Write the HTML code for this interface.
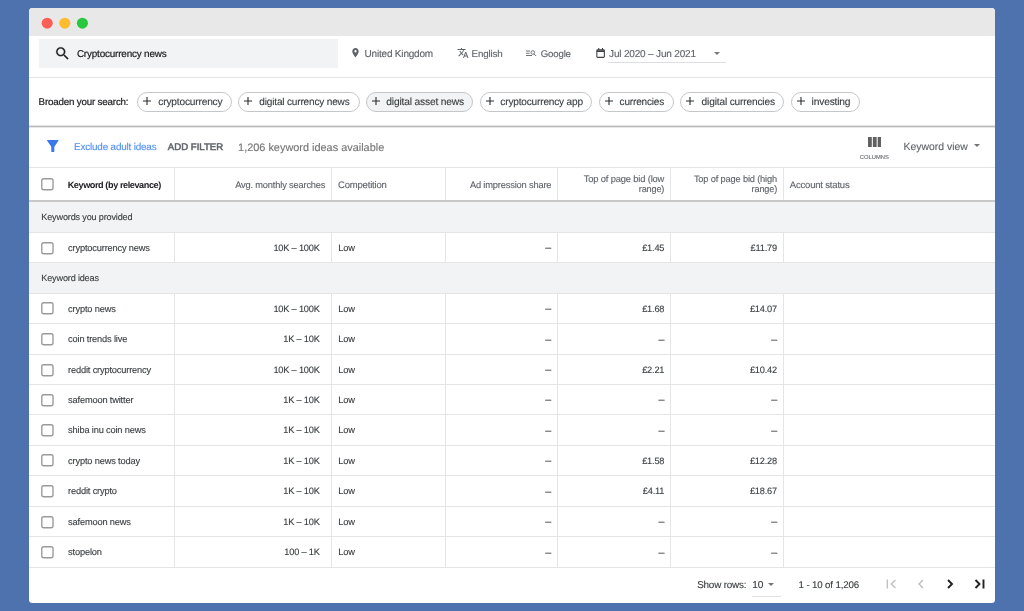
<!DOCTYPE html>
<html><head><meta charset="utf-8">
<style>
*{box-sizing:border-box;margin:0;padding:0}
html,body{width:1024px;height:611px;overflow:hidden}
body{background:#4d72ad;font-family:"Liberation Sans",Arial,sans-serif;color:#3c4043;position:relative;font-size:9px;text-rendering:geometricPrecision}
.win{position:absolute;left:29px;top:8px;width:966px;height:595px;background:#fff;border-radius:3.5px;overflow:hidden;will-change:transform}
.tb{position:absolute;left:0;top:0;width:100%;height:28.3px;background:#e8e8e8}
.dot{position:absolute;width:11px;height:11px;border-radius:50%}
.abs{position:absolute;white-space:nowrap}
.t{position:absolute;white-space:pre;line-height:12px}
.hl{position:absolute;left:0;width:100%;height:1px;background:#e5e5e5}
.chip{position:absolute;height:19.7px;border:1px solid #c4c7c9;border-radius:10px}
.vl{position:absolute;width:1px;background:#e5e5e5}
.rowbg{position:absolute;left:0;width:100%;background:#f1f3f4}
.cb{position:absolute;width:12.6px;height:12.6px;border:1.4px solid #9a9a9a;border-radius:2.5px;background:#fff}
</style></head><body>
<div class="win">
 <div class="tb"></div>
 <svg class="abs" style="left:11px;top:8px" width="50" height="15" viewBox="0 0 50 15"><circle cx="7.200" cy="7.200" r="5.550" fill="#fd5f57"/><circle cx="24.800" cy="7.200" r="5.550" fill="#fdbc2f"/><circle cx="42.400" cy="7.200" r="5.550" fill="#28c840"/></svg>
 <div class="abs" style="left:9.7px;top:31px;width:299.6px;height:29px;background:#f1f3f4"></div>
 <svg class="abs" style="left:25px;top:37px" width="17" height="17" viewBox="0 0 24 24"><path fill="#202124" stroke="#202124" stroke-width=".3" d="M15.500 14h-.79l-.28-.27A6.471 6.471 0 0 0 16 9.500 6.500 6.500 0 1 0 9.500 16c1.610 0 3.090-.590 4.230-1.570l.27.28v.79l5 4.990L20.490 19l-4.990-5zm-6 0C7.010 14 5 11.990 5 9.500S7.010 5 9.500 5 14 7.010 14 9.500 11.990 14 9.500 14z"/></svg>
 <div class="t" style="left:47.90px;top:41.00px;font-size:9.93px;letter-spacing:-0.189px;color:#202124;-webkit-text-stroke:0.2px;">Cryptocurrency news</div>
 <svg class="abs" style="left:321.3px;top:39.3px" width="11" height="11.300" viewBox="0 0 24 24" preserveAspectRatio="none"><path fill="#5f6368" d="M12 2C8.130 2 5 5.130 5 9c0 5.250 7 13 7 13s7-7.750 7-13c0-3.870-3.130-7-7-7zm0 9.500a2.500 2.500 0 0 1 0-5 2.500 2.500 0 0 1 0 5z"/></svg>
 <div class="t" style="left:335.50px;top:41.00px;font-size:10.03px;letter-spacing:-0.196px;color:#5f6368;-webkit-text-stroke:0.12px;">United Kingdom</div>
 <svg class="abs" style="left:427.5px;top:39px" width="12" height="12" viewBox="0 0 24 24"><path fill="#5f6368" d="M12.870 15.070l-2.540-2.510.03-.03A17.520 17.520 0 0 0 14.070 6H17V4h-7V2H8v2H1v1.990h11.170C11.500 7.920 10.440 9.750 9 11.350 8.070 10.320 7.300 9.190 6.690 8h-2c.73 1.630 1.730 3.170 2.980 4.560l-5.090 5.020L4 19l5-5 3.110 3.110.76-2.040zM18.500 10h-2L12 22h2l1.120-3h4.750L21 22h2l-4.500-12zm-2.620 7l1.620-4.330L19.120 17h-3.240z"/></svg>
 <div class="t" style="left:442.60px;top:41.00px;font-size:9.77px;letter-spacing:-0.176px;color:#5f6368;-webkit-text-stroke:0.12px;">English</div>
 <svg class="abs" style="left:497px;top:41.7px" width="10.500" height="6.500" viewBox="0 0 21 13"><g fill="none" stroke="#5f6368" stroke-width="1.800"><path d="M0 2h8M0 6.500h7M0 11h12"/><circle cx="13.500" cy="5" r="3.600"/><path d="M16 7.800l4.500 4.500"/></g></svg>
 <div class="t" style="left:511.80px;top:41.00px;font-size:9.68px;letter-spacing:-0.200px;color:#5f6368;-webkit-text-stroke:0.12px;">Google</div>
 <svg class="abs" style="left:566.8px;top:39.8px" width="9.200" height="10.200" viewBox="0 0 17 19"><g fill="none" stroke="#3c4043" stroke-width="2"><rect x="1.500" y="3.500" width="14" height="14" rx="1.500"/><path d="M1.500 6h14" stroke-width="3"/><path d="M5 0v4M12 0v4"/></g></svg>
 <div class="t" style="left:580.10px;top:41.00px;font-size:10.02px;letter-spacing:-0.183px;color:#5f6368;-webkit-text-stroke:0.12px;">Jul 2020 – Jun 2021</div>
 <div class="abs" style="left:685.3px;top:44px;width:0;height:0;border-left:3.300px solid transparent;border-right:3.300px solid transparent;border-top:3.300px solid #7a7a7a"></div>
 <div class="abs" style="left:579px;top:54px;width:117.500px;height:1px;background:#dcdee1"></div>
 <div class="hl" style="top:69px"></div>
 <div class="t" style="left:9.60px;top:89.00px;font-size:9.77px;letter-spacing:-0.180px;color:#202124;-webkit-text-stroke:0.2px;">Broaden your search:</div>
 <div class="chip" style="left:108px;top:84px;width:95px;"></div>
 <svg class="abs" style="left:114.3px;top:89.4px" width="8" height="8" viewBox="0 0 8 8"><path d="M4 0v8M0 4h8" stroke="#2a2c2f" stroke-width="1.100" fill="none"/></svg>
 <div class="t" style="left:129.35px;top:89.00px;font-size:10.16px;letter-spacing:-0.183px;color:#3c4043;-webkit-text-stroke:0.12px;">cryptocurrency</div>
 <div class="chip" style="left:209px;top:84px;width:122px;"></div>
 <svg class="abs" style="left:215.3px;top:89.4px" width="8" height="8" viewBox="0 0 8 8"><path d="M4 0v8M0 4h8" stroke="#2a2c2f" stroke-width="1.100" fill="none"/></svg>
 <div class="t" style="left:230.35px;top:89.00px;font-size:10.06px;letter-spacing:-0.172px;color:#3c4043;-webkit-text-stroke:0.12px;">digital currency news</div>
 <div class="chip" style="left:336.5px;top:84px;width:107.5px;background:#f1f3f4;"></div>
 <svg class="abs" style="left:342.8px;top:89.4px" width="8" height="8" viewBox="0 0 8 8"><path d="M4 0v8M0 4h8" stroke="#2a2c2f" stroke-width="1.100" fill="none"/></svg>
 <div class="t" style="left:357.35px;top:89.00px;font-size:10.22px;letter-spacing:-0.172px;color:#3c4043;-webkit-text-stroke:0.12px;">digital asset news</div>
 <div class="chip" style="left:451px;top:84px;width:112px;"></div>
 <svg class="abs" style="left:457.3px;top:89.4px" width="8" height="8" viewBox="0 0 8 8"><path d="M4 0v8M0 4h8" stroke="#2a2c2f" stroke-width="1.100" fill="none"/></svg>
 <div class="t" style="left:471.35px;top:89.00px;font-size:10.10px;letter-spacing:-0.183px;color:#3c4043;-webkit-text-stroke:0.12px;">cryptocurrency app</div>
 <div class="chip" style="left:569.5px;top:84px;width:75.5px;"></div>
 <svg class="abs" style="left:575.8px;top:89.4px" width="8" height="8" viewBox="0 0 8 8"><path d="M4 0v8M0 4h8" stroke="#2a2c2f" stroke-width="1.100" fill="none"/></svg>
 <div class="t" style="left:590.60px;top:89.00px;font-size:10.04px;letter-spacing:-0.178px;color:#3c4043;-webkit-text-stroke:0.12px;">currencies</div>
 <div class="chip" style="left:651px;top:84px;width:104px;"></div>
 <svg class="abs" style="left:657.3px;top:89.4px" width="8" height="8" viewBox="0 0 8 8"><path d="M4 0v8M0 4h8" stroke="#2a2c2f" stroke-width="1.100" fill="none"/></svg>
 <div class="t" style="left:672.60px;top:89.00px;font-size:10.16px;letter-spacing:-0.163px;color:#3c4043;-webkit-text-stroke:0.12px;">digital currencies</div>
 <div class="chip" style="left:761.5px;top:84px;width:69px;"></div>
 <svg class="abs" style="left:767.8px;top:89.4px" width="8" height="8" viewBox="0 0 8 8"><path d="M4 0v8M0 4h8" stroke="#2a2c2f" stroke-width="1.100" fill="none"/></svg>
 <div class="t" style="left:782.60px;top:89.00px;font-size:10.22px;letter-spacing:-0.172px;color:#3c4043;-webkit-text-stroke:0.12px;">investing</div>
 <div class="hl" style="top:117px;background:#e2e2e2"></div>
 <div class="hl" style="top:118px;background:#bbb"></div>
 <div class="hl" style="top:119px;background:#e6e6e6"></div>
 <svg class="abs" style="left:18.4px;top:132.3px" width="11.600" height="11.900" viewBox="0 0 11.600 11.900"><path fill="#3b79e8" d="M.4 0h10.800q.6 .3 .1 .9L7.350 6.700V11.300q0 .6-.6 .6H4.850q-.6 0-.6-.6V6.700L.3 .9Q-.2 .3 .4 0z"/></svg>
 <div class="t" style="left:45.10px;top:134.00px;font-size:9.89px;letter-spacing:-0.174px;color:#5290f5;-webkit-text-stroke:0.12px;">Exclude adult ideas</div>
 <div class="t" style="left:138.80px;top:134.00px;font-size:9.62px;letter-spacing:0.000px;color:#5f6368;-webkit-text-stroke:0.5px;">ADD FILTER</div>
 <div class="t" style="left:209.10px;top:134.00px;font-size:10.91px;letter-spacing:0.000px;color:#757575;-webkit-text-stroke:0.12px;">1,206 keyword ideas available</div>
 <svg class="abs" style="left:838.6px;top:129.1px" width="13.500" height="10" viewBox="0 0 13.500 10"><g fill="#616161"><rect x="0" y="0" width="3.800" height="10"/><rect x="4.850" y="0" width="3.800" height="10"/><rect x="9.700" y="0" width="3.800" height="10"/></g></svg>
 <div class="t" style="left:830.85px;top:144.00px;font-size:5.79px;letter-spacing:0.000px;color:#5f6368;-webkit-text-stroke:0.08px;">COLUMNS</div>
 <div class="t" style="left:874.50px;top:134.00px;font-size:10.44px;letter-spacing:0.000px;color:#5f6368;-webkit-text-stroke:0.12px;">Keyword view</div>
 <div class="abs" style="left:944.5px;top:136px;width:0;height:0;border-left:3.600px solid transparent;border-right:3.600px solid transparent;border-top:3.600px solid #757575"></div>
 <div class="hl" style="top:159px"></div>
 <div class="vl" style="left:145px;top:160px;height:400px"></div>
 <div class="vl" style="left:302px;top:160px;height:400px"></div>
 <div class="vl" style="left:416px;top:160px;height:400px"></div>
 <div class="vl" style="left:528px;top:160px;height:400px"></div>
 <div class="vl" style="left:641px;top:160px;height:400px"></div>
 <div class="vl" style="left:754px;top:160px;height:400px"></div>
 <svg class="abs" style="left:12px;top:170.00px" width="13" height="13" viewBox="0 0 13 13"><rect x=".8" y=".75" width="11.200" height="10.950" rx="1.900" fill="#fff" stroke="#999" stroke-width="1.350"/></svg>
 <div class="t" style="left:38.70px;top:171.00px;font-size:9.13px;letter-spacing:-0.424px;color:#202124;font-weight:bold;-webkit-text-stroke:0px;">Keyword (by relevance)</div>
 <div class="t" style="left:206.20px;top:171.00px;font-size:9.29px;letter-spacing:-0.172px;color:#5f6368;-webkit-text-stroke:0.12px;">Avg. monthly searches</div>
 <div class="t" style="left:309.00px;top:172.00px;font-size:9.49px;letter-spacing:-0.177px;color:#5f6368;-webkit-text-stroke:0.12px;">Competition</div>
 <div class="t" style="left:440.90px;top:171.00px;font-size:9.31px;letter-spacing:-0.172px;color:#5f6368;-webkit-text-stroke:0.12px;">Ad impression share</div>
 <div class="t" style="left:554.80px;top:165.00px;font-size:9.35px;letter-spacing:-0.161px;color:#5f6368;-webkit-text-stroke:0.12px;">Top of page bid (low</div>
 <div class="t" style="left:609.80px;top:175.00px;font-size:9.17px;letter-spacing:-0.170px;color:#5f6368;-webkit-text-stroke:0.12px;">range)</div>
 <div class="t" style="left:664.90px;top:165.00px;font-size:9.26px;letter-spacing:-0.158px;color:#5f6368;-webkit-text-stroke:0.12px;">Top of page bid (high</div>
 <div class="t" style="left:722.60px;top:175.00px;font-size:9.17px;letter-spacing:-0.170px;color:#5f6368;-webkit-text-stroke:0.12px;">range)</div>
 <div class="t" style="left:760.80px;top:172.00px;font-size:9.48px;letter-spacing:-0.171px;color:#5f6368;-webkit-text-stroke:0.12px;">Account status</div>
 <div class="hl" style="top:192px;height:2px;background:#c8c8c8"></div>
 <div class="rowbg" style="top:194px;height:30px"></div>
 <div class="t" style="left:12.30px;top:203.00px;font-size:9.12px;letter-spacing:-0.174px;color:#3c4043;-webkit-text-stroke:0.12px;">Keywords you provided</div>
 <div class="hl" style="top:224px"></div>
 <svg class="abs" style="left:12px;top:234.00px" width="13" height="13" viewBox="0 0 13 13"><rect x=".8" y=".75" width="11.200" height="10.950" rx="1.900" fill="#fff" stroke="#999" stroke-width="1.350"/></svg>
 <div class="t" style="left:39.10px;top:234.00px;font-size:9.28px;letter-spacing:-0.172px;color:#3c4043;-webkit-text-stroke:0.12px;">cryptocurrency news</div>
 <div class="t" style="right:675.29px;top:234.00px;font-size:9.23px;letter-spacing:-0.186px;color:#3c4043;-webkit-text-stroke:0.12px;">10K – 100K</div>
 <div class="t" style="left:309.20px;top:234.00px;font-size:9.28px;letter-spacing:-0.172px;color:#3c4043;-webkit-text-stroke:0.12px;">Low</div>
 <div class="t" style="right:443.80px;top:234.00px;font-size:10.80px;letter-spacing:0.000px;color:#5f6368;-webkit-text-stroke:0.12px;">–</div>
 <div class="t" style="right:330.69px;top:234.00px;font-size:9.23px;letter-spacing:-0.186px;color:#3c4043;-webkit-text-stroke:0.12px;">£1.45</div>
 <div class="t" style="right:217.99px;top:234.00px;font-size:9.23px;letter-spacing:-0.186px;color:#3c4043;-webkit-text-stroke:0.12px;">£11.79</div>
 <div class="hl" style="top:254px"></div>
 <div class="rowbg" style="top:255px;height:30px"></div>
 <div class="t" style="left:12.30px;top:264.00px;font-size:9.12px;letter-spacing:-0.174px;color:#3c4043;-webkit-text-stroke:0.12px;">Keyword ideas</div>
 <div class="hl" style="top:285px"></div>
 <svg class="abs" style="left:12px;top:294.00px" width="13" height="13" viewBox="0 0 13 13"><rect x=".8" y=".75" width="11.200" height="10.950" rx="1.900" fill="#fff" stroke="#999" stroke-width="1.350"/></svg>
 <div class="t" style="left:39.10px;top:295.00px;font-size:9.28px;letter-spacing:-0.172px;color:#3c4043;-webkit-text-stroke:0.12px;">crypto news</div>
 <div class="t" style="right:675.29px;top:295.00px;font-size:9.23px;letter-spacing:-0.186px;color:#3c4043;-webkit-text-stroke:0.12px;">10K – 100K</div>
 <div class="t" style="left:309.20px;top:295.00px;font-size:9.28px;letter-spacing:-0.172px;color:#3c4043;-webkit-text-stroke:0.12px;">Low</div>
 <div class="t" style="right:443.80px;top:295.00px;font-size:10.80px;letter-spacing:0.000px;color:#5f6368;-webkit-text-stroke:0.12px;">–</div>
 <div class="t" style="right:330.69px;top:295.00px;font-size:9.23px;letter-spacing:-0.186px;color:#3c4043;-webkit-text-stroke:0.12px;">£1.68</div>
 <div class="t" style="right:217.99px;top:295.00px;font-size:9.23px;letter-spacing:-0.186px;color:#3c4043;-webkit-text-stroke:0.12px;">£14.07</div>
 <div class="hl" style="top:315px"></div>
 <svg class="abs" style="left:12px;top:325.00px" width="13" height="13" viewBox="0 0 13 13"><rect x=".8" y=".75" width="11.200" height="10.950" rx="1.900" fill="#fff" stroke="#999" stroke-width="1.350"/></svg>
 <div class="t" style="left:39.10px;top:325.00px;font-size:9.28px;letter-spacing:-0.172px;color:#3c4043;-webkit-text-stroke:0.12px;">coin trends live</div>
 <div class="t" style="right:675.29px;top:325.00px;font-size:9.23px;letter-spacing:-0.186px;color:#3c4043;-webkit-text-stroke:0.12px;">1K – 10K</div>
 <div class="t" style="left:309.20px;top:325.00px;font-size:9.28px;letter-spacing:-0.172px;color:#3c4043;-webkit-text-stroke:0.12px;">Low</div>
 <div class="t" style="right:443.80px;top:326.00px;font-size:10.80px;letter-spacing:0.000px;color:#5f6368;-webkit-text-stroke:0.12px;">–</div>
 <div class="t" style="right:330.50px;top:326.00px;font-size:10.80px;letter-spacing:0.000px;color:#5f6368;-webkit-text-stroke:0.12px;">–</div>
 <div class="t" style="right:217.80px;top:326.00px;font-size:10.80px;letter-spacing:0.000px;color:#5f6368;-webkit-text-stroke:0.12px;">–</div>
 <div class="hl" style="top:346px"></div>
 <svg class="abs" style="left:12px;top:356.00px" width="13" height="13" viewBox="0 0 13 13"><rect x=".8" y=".75" width="11.200" height="10.950" rx="1.900" fill="#fff" stroke="#999" stroke-width="1.350"/></svg>
 <div class="t" style="left:39.10px;top:356.00px;font-size:9.28px;letter-spacing:-0.172px;color:#3c4043;-webkit-text-stroke:0.12px;">reddit cryptocurrency</div>
 <div class="t" style="right:675.29px;top:356.00px;font-size:9.23px;letter-spacing:-0.186px;color:#3c4043;-webkit-text-stroke:0.12px;">10K – 100K</div>
 <div class="t" style="left:309.20px;top:356.00px;font-size:9.28px;letter-spacing:-0.172px;color:#3c4043;-webkit-text-stroke:0.12px;">Low</div>
 <div class="t" style="right:443.80px;top:356.00px;font-size:10.80px;letter-spacing:0.000px;color:#5f6368;-webkit-text-stroke:0.12px;">–</div>
 <div class="t" style="right:330.69px;top:356.00px;font-size:9.23px;letter-spacing:-0.186px;color:#3c4043;-webkit-text-stroke:0.12px;">£2.21</div>
 <div class="t" style="right:217.99px;top:356.00px;font-size:9.23px;letter-spacing:-0.186px;color:#3c4043;-webkit-text-stroke:0.12px;">£10.42</div>
 <div class="hl" style="top:376px"></div>
 <svg class="abs" style="left:12px;top:386.00px" width="13" height="13" viewBox="0 0 13 13"><rect x=".8" y=".75" width="11.200" height="10.950" rx="1.900" fill="#fff" stroke="#999" stroke-width="1.350"/></svg>
 <div class="t" style="left:39.10px;top:386.00px;font-size:9.28px;letter-spacing:-0.172px;color:#3c4043;-webkit-text-stroke:0.12px;">safemoon twitter</div>
 <div class="t" style="right:675.29px;top:386.00px;font-size:9.23px;letter-spacing:-0.186px;color:#3c4043;-webkit-text-stroke:0.12px;">1K – 10K</div>
 <div class="t" style="left:309.20px;top:386.00px;font-size:9.28px;letter-spacing:-0.172px;color:#3c4043;-webkit-text-stroke:0.12px;">Low</div>
 <div class="t" style="right:443.80px;top:386.00px;font-size:10.80px;letter-spacing:0.000px;color:#5f6368;-webkit-text-stroke:0.12px;">–</div>
 <div class="t" style="right:330.50px;top:386.00px;font-size:10.80px;letter-spacing:0.000px;color:#5f6368;-webkit-text-stroke:0.12px;">–</div>
 <div class="t" style="right:217.80px;top:386.00px;font-size:10.80px;letter-spacing:0.000px;color:#5f6368;-webkit-text-stroke:0.12px;">–</div>
 <div class="hl" style="top:406px"></div>
 <svg class="abs" style="left:12px;top:416.00px" width="13" height="13" viewBox="0 0 13 13"><rect x=".8" y=".75" width="11.200" height="10.950" rx="1.900" fill="#fff" stroke="#999" stroke-width="1.350"/></svg>
 <div class="t" style="left:39.10px;top:416.00px;font-size:9.28px;letter-spacing:-0.172px;color:#3c4043;-webkit-text-stroke:0.12px;">shiba inu coin news</div>
 <div class="t" style="right:675.29px;top:416.00px;font-size:9.23px;letter-spacing:-0.186px;color:#3c4043;-webkit-text-stroke:0.12px;">1K – 10K</div>
 <div class="t" style="left:309.20px;top:416.00px;font-size:9.28px;letter-spacing:-0.172px;color:#3c4043;-webkit-text-stroke:0.12px;">Low</div>
 <div class="t" style="right:443.80px;top:417.00px;font-size:10.80px;letter-spacing:0.000px;color:#5f6368;-webkit-text-stroke:0.12px;">–</div>
 <div class="t" style="right:330.50px;top:417.00px;font-size:10.80px;letter-spacing:0.000px;color:#5f6368;-webkit-text-stroke:0.12px;">–</div>
 <div class="t" style="right:217.80px;top:417.00px;font-size:10.80px;letter-spacing:0.000px;color:#5f6368;-webkit-text-stroke:0.12px;">–</div>
 <div class="hl" style="top:437px"></div>
 <svg class="abs" style="left:12px;top:446.00px" width="13" height="13" viewBox="0 0 13 13"><rect x=".8" y=".75" width="11.200" height="10.950" rx="1.900" fill="#fff" stroke="#999" stroke-width="1.350"/></svg>
 <div class="t" style="left:39.10px;top:447.00px;font-size:9.28px;letter-spacing:-0.172px;color:#3c4043;-webkit-text-stroke:0.12px;">crypto news today</div>
 <div class="t" style="right:675.29px;top:447.00px;font-size:9.23px;letter-spacing:-0.186px;color:#3c4043;-webkit-text-stroke:0.12px;">1K – 10K</div>
 <div class="t" style="left:309.20px;top:447.00px;font-size:9.28px;letter-spacing:-0.172px;color:#3c4043;-webkit-text-stroke:0.12px;">Low</div>
 <div class="t" style="right:443.80px;top:447.00px;font-size:10.80px;letter-spacing:0.000px;color:#5f6368;-webkit-text-stroke:0.12px;">–</div>
 <div class="t" style="right:330.69px;top:447.00px;font-size:9.23px;letter-spacing:-0.186px;color:#3c4043;-webkit-text-stroke:0.12px;">£1.58</div>
 <div class="t" style="right:217.99px;top:447.00px;font-size:9.23px;letter-spacing:-0.186px;color:#3c4043;-webkit-text-stroke:0.12px;">£12.28</div>
 <div class="hl" style="top:467px"></div>
 <svg class="abs" style="left:12px;top:477.00px" width="13" height="13" viewBox="0 0 13 13"><rect x=".8" y=".75" width="11.200" height="10.950" rx="1.900" fill="#fff" stroke="#999" stroke-width="1.350"/></svg>
 <div class="t" style="left:39.10px;top:477.00px;font-size:9.28px;letter-spacing:-0.172px;color:#3c4043;-webkit-text-stroke:0.12px;">reddit crypto</div>
 <div class="t" style="right:675.29px;top:477.00px;font-size:9.23px;letter-spacing:-0.186px;color:#3c4043;-webkit-text-stroke:0.12px;">1K – 10K</div>
 <div class="t" style="left:309.20px;top:477.00px;font-size:9.28px;letter-spacing:-0.172px;color:#3c4043;-webkit-text-stroke:0.12px;">Low</div>
 <div class="t" style="right:443.80px;top:478.00px;font-size:10.80px;letter-spacing:0.000px;color:#5f6368;-webkit-text-stroke:0.12px;">–</div>
 <div class="t" style="right:330.69px;top:477.00px;font-size:9.23px;letter-spacing:-0.186px;color:#3c4043;-webkit-text-stroke:0.12px;">£4.11</div>
 <div class="t" style="right:217.99px;top:477.00px;font-size:9.23px;letter-spacing:-0.186px;color:#3c4043;-webkit-text-stroke:0.12px;">£18.67</div>
 <div class="hl" style="top:498px"></div>
 <svg class="abs" style="left:12px;top:508.00px" width="13" height="13" viewBox="0 0 13 13"><rect x=".8" y=".75" width="11.200" height="10.950" rx="1.900" fill="#fff" stroke="#999" stroke-width="1.350"/></svg>
 <div class="t" style="left:39.10px;top:508.00px;font-size:9.28px;letter-spacing:-0.172px;color:#3c4043;-webkit-text-stroke:0.12px;">safemoon news</div>
 <div class="t" style="right:675.29px;top:508.00px;font-size:9.23px;letter-spacing:-0.186px;color:#3c4043;-webkit-text-stroke:0.12px;">1K – 10K</div>
 <div class="t" style="left:309.20px;top:508.00px;font-size:9.28px;letter-spacing:-0.172px;color:#3c4043;-webkit-text-stroke:0.12px;">Low</div>
 <div class="t" style="right:443.80px;top:508.00px;font-size:10.80px;letter-spacing:0.000px;color:#5f6368;-webkit-text-stroke:0.12px;">–</div>
 <div class="t" style="right:330.50px;top:508.00px;font-size:10.80px;letter-spacing:0.000px;color:#5f6368;-webkit-text-stroke:0.12px;">–</div>
 <div class="t" style="right:217.80px;top:508.00px;font-size:10.80px;letter-spacing:0.000px;color:#5f6368;-webkit-text-stroke:0.12px;">–</div>
 <div class="hl" style="top:528px"></div>
 <svg class="abs" style="left:12px;top:538.00px" width="13" height="13" viewBox="0 0 13 13"><rect x=".8" y=".75" width="11.200" height="10.950" rx="1.900" fill="#fff" stroke="#999" stroke-width="1.350"/></svg>
 <div class="t" style="left:39.10px;top:538.00px;font-size:9.28px;letter-spacing:-0.172px;color:#3c4043;-webkit-text-stroke:0.12px;">stopelon</div>
 <div class="t" style="right:675.29px;top:538.00px;font-size:9.23px;letter-spacing:-0.186px;color:#3c4043;-webkit-text-stroke:0.12px;">100 – 1K</div>
 <div class="t" style="left:309.20px;top:538.00px;font-size:9.28px;letter-spacing:-0.172px;color:#3c4043;-webkit-text-stroke:0.12px;">Low</div>
 <div class="t" style="right:443.80px;top:539.00px;font-size:10.80px;letter-spacing:0.000px;color:#5f6368;-webkit-text-stroke:0.12px;">–</div>
 <div class="t" style="right:330.50px;top:539.00px;font-size:10.80px;letter-spacing:0.000px;color:#5f6368;-webkit-text-stroke:0.12px;">–</div>
 <div class="t" style="right:217.80px;top:539.00px;font-size:10.80px;letter-spacing:0.000px;color:#5f6368;-webkit-text-stroke:0.12px;">–</div>
 <div class="hl" style="top:559px"></div>
 <div class="t" style="left:668.20px;top:572.00px;font-size:9.90px;letter-spacing:-0.197px;color:#3c4043;-webkit-text-stroke:0.12px;">Show rows:</div>
 <div class="t" style="left:723.30px;top:572.00px;font-size:10.10px;letter-spacing:-0.216px;color:#3c4043;-webkit-text-stroke:0.12px;">10</div>
 <div class="abs" style="left:738.8px;top:574.8px;width:0;height:0;border-left:3.700px solid transparent;border-right:3.700px solid transparent;border-top:3.500px solid #757575"></div>
 <div class="abs" style="left:723px;top:588px;width:28.500px;height:1px;background:#e0e0e0"></div>
 <div class="t" style="left:769.60px;top:572.00px;font-size:9.74px;letter-spacing:-0.161px;color:#3c4043;-webkit-text-stroke:0.12px;">1 - 10 of 1,206</div>
 <svg class="abs" style="left:857px;top:571.3px" width="10" height="10" viewBox="0 0 10 10"><path d="M1.300 .5v9M9.500 1L5.300 5l4.200 4" stroke="#c0c0c0" stroke-width="1.400" fill="none"/></svg>
 <svg class="abs" style="left:887px;top:571.3px" width="10" height="10" viewBox="0 0 10 10"><path d="M7 1L3 5l4 4" stroke="#bdbdbd" stroke-width="1.400" fill="none"/></svg>
 <svg class="abs" style="left:916px;top:571.3px" width="10" height="10" viewBox="0 0 10 10"><path d="M3 1l4 4-4 4" stroke="#202124" stroke-width="1.900" fill="none"/></svg>
 <svg class="abs" style="left:945px;top:571.3px" width="11" height="10" viewBox="0 0 11 10"><path d="M1.500 1l4 4-4 4M9.500 .5v9" stroke="#202124" stroke-width="1.900" fill="none"/></svg>
</div>
</body></html>
